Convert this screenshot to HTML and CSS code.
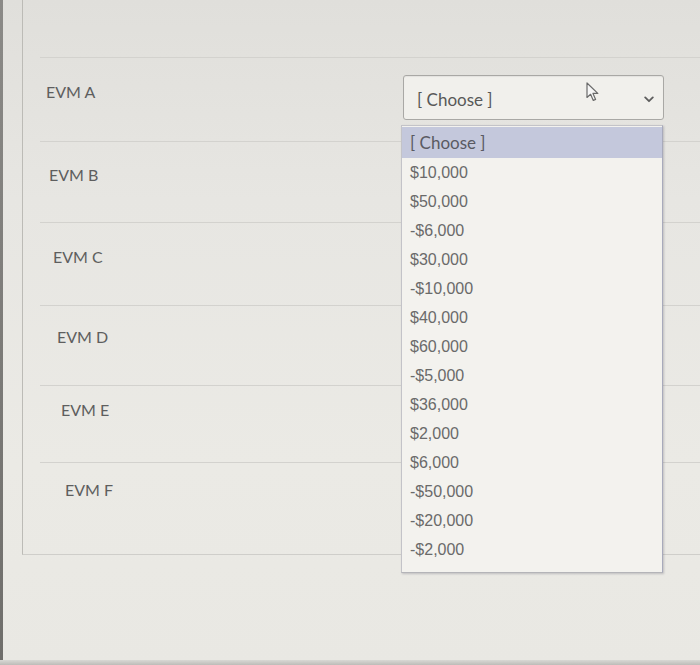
FILE: index.html
```html
<!DOCTYPE html>
<html>
<head>
<meta charset="utf-8">
<link rel="stylesheet" href="styles.css">
</head>
<body>
<div class="screen">
  <div class="bezel"></div>
  <div class="card">
    <div class="card-head"></div>
    <div class="row row-a">
      <div class="label">EVM A</div>
      <div class="select">
        <span class="select-text">[ Choose ]</span>
        <svg class="chevron" width="10" height="7" viewBox="0 0 10 7"><path d="M1.2 1.4 L5 5.2 L8.8 1.4" fill="none" stroke="#5e5e5e" stroke-width="1.8" stroke-linecap="round" stroke-linejoin="round"/></svg>
      </div>
      <svg class="cursor" width="14" height="20" viewBox="0 0 14 20"><path d="M1 1 L1 15.5 L4.6 12.3 L7.3 18.4 L9.6 17.4 L7 11.4 L11.8 11.4 Z" fill="#f6f6f6" stroke="#6a6a6a" stroke-width="1.2" stroke-linejoin="round"/></svg>
      <ul class="menu">
        <li class="opt opt-active">[ Choose ]</li>
        <li class="opt">$10,000</li>
        <li class="opt">$50,000</li>
        <li class="opt">-$6,000</li>
        <li class="opt">$30,000</li>
        <li class="opt">-$10,000</li>
        <li class="opt">$40,000</li>
        <li class="opt">$60,000</li>
        <li class="opt">-$5,000</li>
        <li class="opt">$36,000</li>
        <li class="opt">$2,000</li>
        <li class="opt">$6,000</li>
        <li class="opt">-$50,000</li>
        <li class="opt">-$20,000</li>
        <li class="opt">-$2,000</li>
      </ul>
    </div>
    <div class="row row-b"><div class="label">EVM B</div></div>
    <div class="row row-c"><div class="label">EVM C</div></div>
    <div class="row row-d"><div class="label">EVM D</div></div>
    <div class="row row-e"><div class="label">EVM E</div></div>
    <div class="row row-f"><div class="label">EVM F</div></div>
  </div>
</div>
<div class="foot"></div>
</body>
</html>
```

FILE: styles.css
```css
html, body {
  margin: 0;
  padding: 0;
}
body {
  width: 700px;
  height: 665px;
  overflow: hidden;
  background: linear-gradient(180deg, #e0dfdb 0%, #e7e6e2 30%, #ebeae5 70%, #e9e8e3 100%);
  font-family: Lato, "Liberation Sans", sans-serif;
}
.screen {
  display: flex;
  height: 660px;
}
.bezel {
  width: 3px;
  flex: none;
  background: linear-gradient(180deg, #8b8a87, #6f6e6b);
}
.card {
  flex: 1;
  margin-left: 19px;
  height: 555px;
  border-left: 1px solid #bcbbb6;
  border-bottom: 1px solid #cfceca;
  box-sizing: border-box;
}
.card-head {
  height: 57px;
}
.row {
  position: relative;
  margin-left: 17px;
  border-top: 1px solid #d3d2ce;
  display: grid;
  grid-template-columns: 363px 261px;
  align-items: start;
  box-sizing: border-box;
}
.label {
  font-size: 16px;
  line-height: 20px;
  color: #5e5e5e;
}
.row-a { height: 84px; }
.row-a .label { padding: 24px 0 0 6px; }
.row-b { height: 81px; }
.row-b .label { padding: 23px 0 0 9px; }
.row-c { height: 83px; }
.row-c .label { padding: 24px 0 0 13px; }
.row-d { height: 80px; }
.row-d .label { padding: 21px 0 0 17px; }
.row-e { height: 77px; }
.row-e .label { padding: 14px 0 0 21px; }
.row-f { height: 92px; }
.row-f .label { padding: 17px 0 0 25px; }

.select {
  margin-top: 17px;
  height: 45px;
  box-sizing: border-box;
  border: 1px solid #a9a8a5;
  border-radius: 3px;
  background: #f1f0ec;
  box-shadow: inset 0 1px 1px rgba(0,0,0,0.06);
  display: flex;
  align-items: center;
  justify-content: space-between;
  padding: 3px 9px 0 13px;
}
.select-text {
  font-size: 17px;
  color: #585858;
}
.chevron {
  display: block;
}
.cursor {
  position: absolute;
  left: 546px;
  top: 24px;
}
.menu {
  position: absolute;
  left: 361px;
  top: 67px;
  width: 262px;
  margin: 0;
  padding: 1px 0 8px;
  list-style: none;
  background: #f3f2ee;
  border: 1px solid #c3c3c8;
  border-right-color: #a8aabb;
  border-bottom-color: #b4b4b8;
  box-shadow: 1px 1px 2px rgba(60,60,80,0.25);
  box-sizing: border-box;
  z-index: 2;
}
.opt {
  height: 29px;
  line-height: 29px;
  padding-left: 8px;
  font-family: "Liberation Sans", Arial, sans-serif;
  font-size: 16px;
  color: #6a6a6a;
}
.opt-active {
  height: 31px;
  line-height: 31px;
  background: #c4c8dc;
  font-family: Lato, "Liberation Sans", sans-serif;
  font-size: 17px;
  color: #5a5a62;
}
.foot {
  height: 5px;
  background: linear-gradient(180deg, #d9d8d4, #bdbcb8);
}
```
